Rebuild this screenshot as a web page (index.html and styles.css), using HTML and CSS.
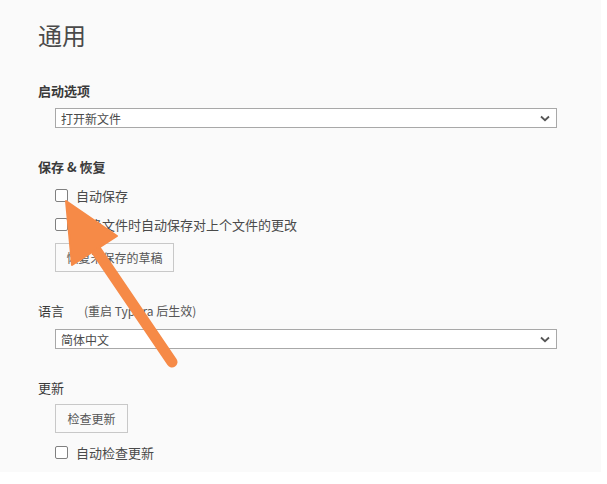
FILE: index.html
```html
<!DOCTYPE html>
<html lang="zh">
<head>
<meta charset="utf-8">
<link rel="stylesheet" href="styles.css">
</head>
<body>
<div class="page">
  <h1 class="title">通用</h1>

  <div class="section first">
    <div class="heading bold">启动选项</div>
    <div class="select"><span>打开新文件</span>
      <svg class="chev" width="10" height="7" viewBox="0 0 10 7"><path d="M1 1.5 L5 5.2 L9 1.5" fill="none" stroke="#555" stroke-width="1.8"/></svg>
    </div>
  </div>

  <div class="section">
    <div class="heading bold">保存 &amp; 恢复</div>
    <div class="check"><span class="box"></span><span>自动保存</span></div>
    <div class="check"><span class="box"></span><span>切换文件时自动保存对上个文件的更改</span></div>
    <div class="btn wide">恢复未保存的草稿</div>
  </div>

  <div class="section">
    <div class="heading">语言<span class="note">(重启 Typora 后生效)</span></div>
    <div class="select tight"><span>简体中文</span>
      <svg class="chev" width="10" height="7" viewBox="0 0 10 7"><path d="M1 1.5 L5 5.2 L9 1.5" fill="none" stroke="#555" stroke-width="1.8"/></svg>
    </div>
  </div>

  <div class="section">
    <div class="heading">更新</div>
    <div class="btn small">检查更新</div>
    <div class="check last"><span class="box"></span><span>自动检查更新</span></div>
  </div>

  <svg class="arrow" width="601" height="472" viewBox="0 0 601 472">
    <line x1="96" y1="250" x2="172" y2="362" stroke="#f68a47" stroke-width="11" stroke-linecap="round"/>
    <polygon points="66,201 72,265 117,236" fill="#f68a47" stroke="#f68a47" stroke-width="2" stroke-linejoin="round"/>
  </svg>
</div>
</body>
</html>
```

FILE: styles.css
```css
html, body {
  margin: 0;
  padding: 0;
  background: #ffffff;
}
.page {
  position: relative;
  width: 601px;
  height: 472px;
  box-sizing: border-box;
  padding: 19px 44px 0 38px;
  background: #fafafa;
  font-family: "Noto Sans CJK SC", "Noto Sans", sans-serif;
  color: #4a4a4a;
}
.title {
  margin: 0;
  font-size: 24px;
  line-height: 32px;
  font-weight: 400;
  color: #4a4a4a;
}
.section {
  margin-top: 30px;
  display: flex;
  flex-direction: column;
  align-items: flex-start;
}
.section.first {
  margin-top: 31px;
}
.heading {
  font-size: 13px;
  line-height: 18px;
  color: #3a3a3a;
  margin-bottom: 8px;
}
.heading.bold {
  font-weight: 600;
}
.note {
  font-size: 12px;
  color: #555;
  margin-left: 20px;
}
.select {
  align-self: stretch;
  margin-left: 17px;
  height: 20px;
  box-sizing: border-box;
  border: 1px solid #a8a8a8;
  background: #fff;
  display: flex;
  align-items: center;
  justify-content: space-between;
  padding: 0 6px 0 5px;
  font-size: 12px;
  color: #4a4a4a;
}
.select.tight {
  margin-top: 1px;
}
.chev {
  display: block;
}
.check {
  margin-left: 17px;
  margin-top: 2px;
  height: 18px;
  display: flex;
  align-items: center;
  font-size: 13px;
  color: #4a4a4a;
}
.check + .check {
  margin-top: 11px;
}
.box {
  width: 11px;
  height: 11px;
  border: 1px solid #808080;
  border-radius: 2px;
  background: #fff;
  margin-right: 8px;
}
.btn {
  margin-left: 17px;
  height: 29px;
  box-sizing: border-box;
  border: 1px solid #c8c8c8;
  background: #fafafa;
  display: flex;
  align-items: center;
  justify-content: center;
  font-size: 12px;
  color: #555;
}
.btn.wide {
  width: 119px;
  margin-top: 10px;
}
.btn.small {
  width: 73px;
  margin-top: -1px;
}
.check.last {
  margin-top: 10px;
}
.arrow {
  position: absolute;
  left: 0;
  top: 0;
  pointer-events: none;
}
```
